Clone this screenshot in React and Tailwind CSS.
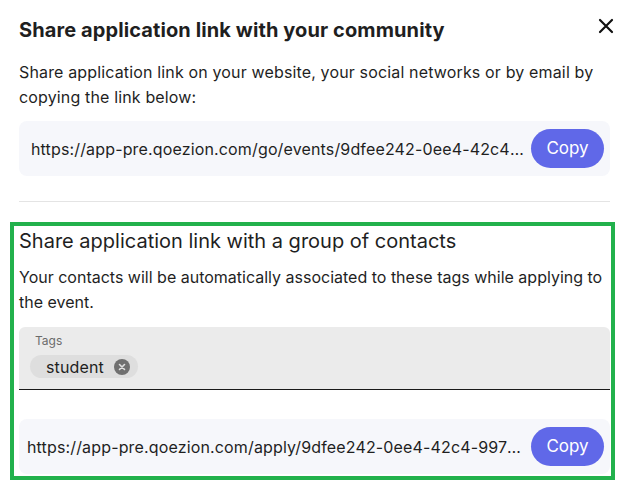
import { useState } from "react";

const CloseIcon = () => (
  <svg width="16" height="16" viewBox="0 0 16 16" fill="none">
    <path
      d="M2 2L14 14M14 2L2 14"
      stroke="#111"
      strokeWidth="2.2"
      strokeLinecap="round"
    />
  </svg>
);

const LinkBox = ({ url, textClass }) => (
  <div className="flex items-center h-[55px] bg-[#f6f7fb] rounded-lg pr-[6px]">
    <span className={`flex-1 min-w-0 truncate text-[16px] tracking-[0.15px] text-[#1f1f1f] ${textClass}`}>
      {url}
    </span>
    <button className="ml-[4px] shrink-0 w-[73px] h-[39px] rounded-full bg-[#6068e8] text-white text-[17px]">
      Copy
    </button>
  </div>
);

export default function App() {
  const [tags] = useState(["student"]);

  return (
    <div
      className="w-[625px] h-[489px] bg-white pl-[19px] pr-[15px] pt-[16px] text-[#1f1f1f]"
      style={{ fontFamily: "Inter, 'Noto Sans', sans-serif" }}
    >
      <div className="flex items-start justify-between">
        <h1 className="text-[20px] leading-[28px] font-bold tracking-[0.1px]">
          Share application link with your community
        </h1>
        <button className="mt-[2px] -mr-[4px]">
          <CloseIcon />
        </button>
      </div>

      <p className="mt-[16px] text-[16px] leading-[25px] tracking-[0.15px]">
        Share application link on your website, your social networks or by
        email by copying the link below:
      </p>

      <div className="mt-[11px]">
        <LinkBox
          url="https://app-pre.qoezion.com/go/events/9dfee242-0ee4-42c4-9975-a1b2c3d4e5f6"
          textClass="pl-[12px]"
        />
      </div>

      <div className="mt-[25px] h-px bg-[#e4e4e4]" />

      <section className="mt-[20px] -ml-[9px] -mr-[5px] border-4 border-[#22b14c] pl-[5px] pr-[1px] h-[258px]">
        <h2 className="text-[20px] leading-[28px] pt-[1px]">
          Share application link with a group of contacts
        </h2>
        <p className="mt-[10px] text-[16px] leading-[25px]">
          Your contacts will be automatically associated to these tags while
          applying to the event.
        </p>

        <div className="mt-[12px] h-[63px] bg-[#ebebeb] rounded-t-md border-b border-[#1a1a1a] px-[11px] pt-[7px]">
          <div className="text-[12px] leading-[14px] text-[#6b6b6b] pl-[5px]">
            Tags
          </div>
          <div className="mt-[7px] flex gap-2">
            {tags.map((t) => (
              <span
                key={t}
                className="inline-flex items-center h-[23px] rounded-full bg-[#dedede] pl-[16px] pr-[8px] text-[16px] tracking-[0.15px]"
              >
                {t}
                <span className="ml-[10px] w-[16px] h-[16px] rounded-full bg-[#707070] flex items-center justify-center">
                  <svg width="8" height="8" viewBox="0 0 8 8">
                    <path
                      d="M1.5 1.5L6.5 6.5M6.5 1.5L1.5 6.5"
                      stroke="#e0e0e0"
                      strokeWidth="1.6"
                      strokeLinecap="round"
                    />
                  </svg>
                </span>
              </span>
            ))}
          </div>
        </div>

        <div className="mt-[29px]">
          <LinkBox
            url="https://app-pre.qoezion.com/apply/9dfee242-0ee4-42c4-9975-a1b2c3d4e5f6"
            textClass="pl-[8px]"
          />
        </div>
      </section>
    </div>
  );
}
